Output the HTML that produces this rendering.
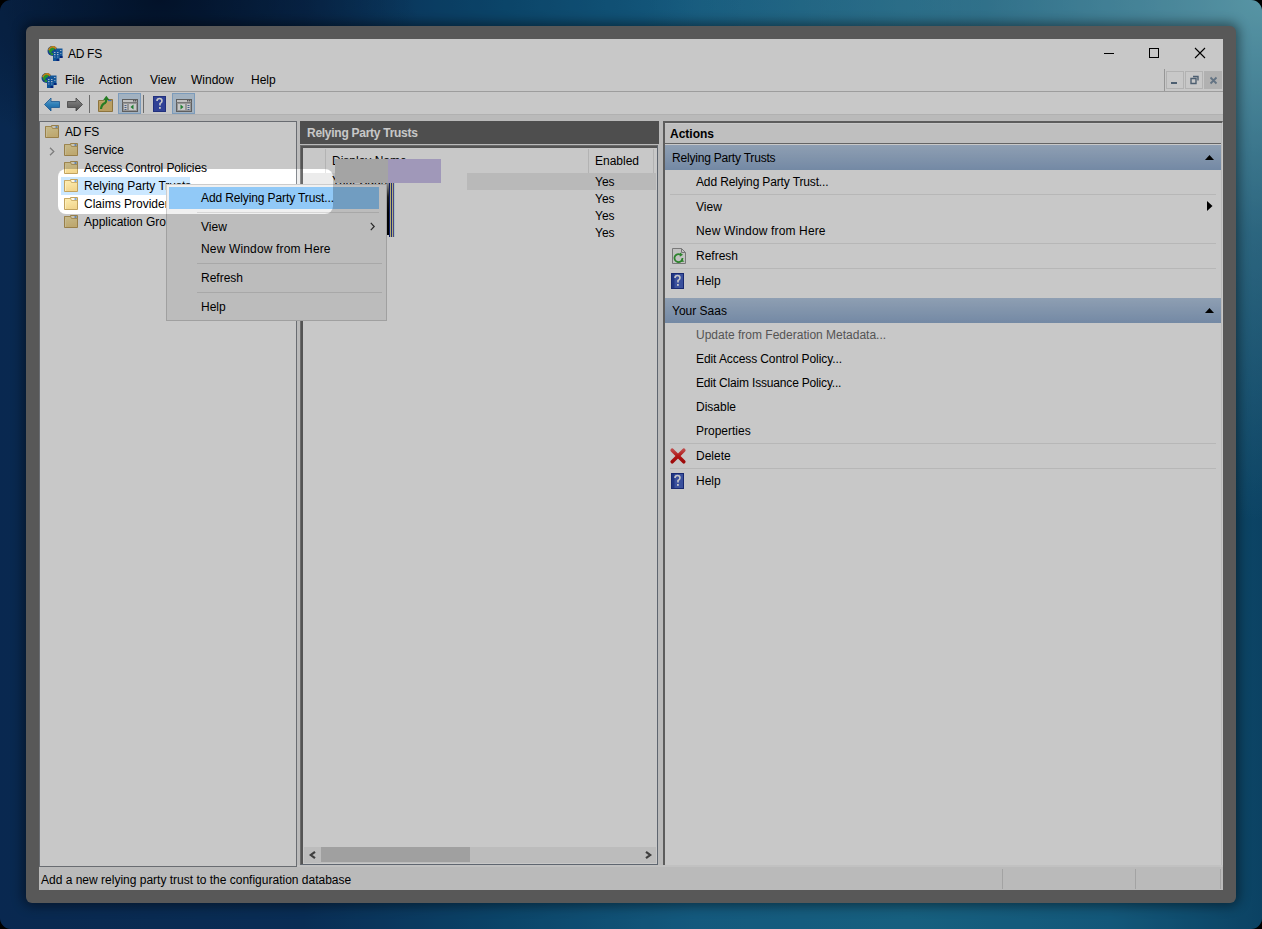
<!DOCTYPE html>
<html><head><meta charset="utf-8">
<style>
*{box-sizing:border-box}
html,body{margin:0;padding:0}
body{width:1262px;height:929px;background:#000;overflow:hidden;position:relative;font-family:"Liberation Sans",sans-serif;font-size:12px;color:#000}
.a{position:absolute}
.t{position:absolute;white-space:nowrap;line-height:16px;font-size:12px;color:#000}
.b{font-weight:bold}
svg{position:absolute;overflow:visible}
#scr{position:absolute;left:0;top:0;width:1262px;height:929px;border-radius:11px;overflow:hidden;
 background:
  radial-gradient(ellipse 620px 520px at 1262px 0px, rgba(112,190,210,1) 0%, rgba(90,165,190,0.55) 45%, rgba(60,140,170,0) 100%),
  radial-gradient(ellipse 260px 160px at 160px 0px, rgba(4,22,50,0.95) 0%, rgba(4,22,50,0) 100%),
  linear-gradient(90deg,#0c3466 0%,#0c3a6c 24%,#0f5886 40%,#1a72a0 55%,#1e7aa2 72%,#19709b 88%,#0f557f 100%);
}
#win{position:absolute;left:26px;top:26px;width:1210px;height:877px;background:#717171;border-radius:6px;box-shadow:0 0 12px 3px rgba(0,0,0,0.45)}
#cont{position:absolute;left:39px;top:39px;width:1184px;height:851px;background:#fff}
#spot{position:absolute;left:58px;top:169px;width:275px;height:45px;border-radius:8px;box-shadow:0 0 0 3000px rgba(0,0,0,0.215);pointer-events:none}
.sep{position:absolute;height:1px;background:#eaeaea}
</style></head><body>
<div id="scr">
 <div id="win"></div>
 <div id="cont"></div>

 <!-- title bar -->
 <svg id="appico1" style="left:47px;top:45px" width="16" height="16" viewBox="0 0 16 16">
  <g>
   <circle cx="5.5" cy="6" r="5" fill="#1d4fb8"/>
   <path d="M1.5 4 Q3 1.5 6 1.2 L8 2.5 7 5 5 6 4 8.5 2 7.5Z" fill="#2fbd3a"/>
   <path d="M1 5 Q2.5 0.5 7 1 Q9.5 1.5 10 4 L8.5 4.5 Q7.5 2.5 5 2.8 Q2.8 3.2 2.5 5.5Z" fill="#f0a020"/>
   <path d="M3 9 Q5 11 8 10 L7 8 5 8Z" fill="#2fbd3a"/>
   <rect x="9" y="3.5" width="6.5" height="9.5" fill="#1a6fc4"/>
   <rect x="6" y="6" width="6.5" height="10" fill="#1569c0"/>
   <rect x="7" y="7" width="1.5" height="1" fill="#cfe4ff"/><rect x="10" y="7" width="1.5" height="1" fill="#cfe4ff"/>
   <rect x="7" y="9" width="1.5" height="1.2" fill="#cfe4ff"/><rect x="10" y="9" width="1.5" height="1.2" fill="#cfe4ff"/>
   <rect x="7" y="11.5" width="1.5" height="1" fill="#8fc0f0"/><rect x="10" y="11.5" width="1.5" height="1" fill="#8fc0f0"/>
   <rect x="13" y="5" width="1.5" height="1" fill="#cfe4ff"/><rect x="13" y="8" width="1.5" height="1" fill="#8fc0f0"/>
   <rect x="9.5" y="14" width="2.5" height="2" fill="#0a2f9a"/><rect x="13" y="11" width="2.5" height="2" fill="#0a2f9a"/>
  </g>
 </svg>
 <div class="t" style="left:68px;top:46px;letter-spacing:-0.3px">AD FS</div>
 <div class="a" style="left:1104px;top:53px;width:10px;height:1px;background:#000"></div>
 <div class="a" style="left:1149px;top:48px;width:10px;height:10px;border:1px solid #000"></div>
 <svg style="left:1195px;top:48px" width="10" height="10" viewBox="0 0 10 10"><path d="M0 0L10 10M10 0L0 10" stroke="#000" stroke-width="1.1"/></svg>

 <!-- menu bar -->
 <svg style="left:41px;top:72px" width="16" height="16" viewBox="0 0 16 16"><g><circle cx="5.5" cy="6" r="5" fill="#1d4fb8"/>
   <path d="M1.5 4 Q3 1.5 6 1.2 L8 2.5 7 5 5 6 4 8.5 2 7.5Z" fill="#2fbd3a"/>
   <path d="M1 5 Q2.5 0.5 7 1 Q9.5 1.5 10 4 L8.5 4.5 Q7.5 2.5 5 2.8 Q2.8 3.2 2.5 5.5Z" fill="#f0a020"/>
   <path d="M3 9 Q5 11 8 10 L7 8 5 8Z" fill="#2fbd3a"/>
   <rect x="9" y="3.5" width="6.5" height="9.5" fill="#1a6fc4"/>
   <rect x="6" y="6" width="6.5" height="10" fill="#1569c0"/>
   <rect x="7" y="7" width="1.5" height="1" fill="#cfe4ff"/><rect x="10" y="7" width="1.5" height="1" fill="#cfe4ff"/>
   <rect x="7" y="9" width="1.5" height="1.2" fill="#cfe4ff"/><rect x="10" y="9" width="1.5" height="1.2" fill="#cfe4ff"/>
   <rect x="7" y="11.5" width="1.5" height="1" fill="#8fc0f0"/><rect x="10" y="11.5" width="1.5" height="1" fill="#8fc0f0"/>
   <rect x="13" y="5" width="1.5" height="1" fill="#cfe4ff"/><rect x="13" y="8" width="1.5" height="1" fill="#8fc0f0"/>
   <rect x="9.5" y="14" width="2.5" height="2" fill="#0a2f9a"/><rect x="13" y="11" width="2.5" height="2" fill="#0a2f9a"/></g></svg>
 <div class="t" style="left:65px;top:72px">File</div>
 <div class="t" style="left:99px;top:72px">Action</div>
 <div class="t" style="left:150px;top:72px">View</div>
 <div class="t" style="left:191px;top:72px">Window</div>
 <div class="t" style="left:251px;top:72px">Help</div>
 <div class="a" style="left:1164px;top:69px;width:1px;height:23px;background:#c0c0c0"></div>
 <div class="a" style="left:1166px;top:71px;width:18px;height:18px;border:1px solid #e3e3e3"></div>
 <div class="a" style="left:1171px;top:82px;width:6px;height:2px;background:#637990"></div>
 <div class="a" style="left:1185px;top:71px;width:18px;height:18px;border:1px solid #e3e3e3"></div>
 <svg style="left:1190px;top:75px" width="10" height="10" viewBox="0 0 10 10"><path d="M3 1.5h5v4M1 3.5h5v5h-5z" fill="none" stroke="#637990" stroke-width="1.4"/></svg>
 <div class="a" style="left:1204px;top:71px;width:18px;height:18px;background:#e2e2e2"></div>
 <svg style="left:1210px;top:77px" width="7" height="7" viewBox="0 0 7 7"><path d="M0.5 0.5L6.5 6.5M6.5 0.5L0.5 6.5" stroke="#7f93a8" stroke-width="1.8"/></svg>
 <div class="a" style="left:39px;top:91px;width:1184px;height:1px;background:#c8c8c8"></div>

 <!-- toolbar -->
 <div class="a" style="left:39px;top:114px;width:1184px;height:776px;background:#eeeeee"></div>
 <div class="a" style="left:39px;top:114px;width:1184px;height:1px;background:#e2e2e2"></div>
 <svg style="left:44px;top:97px" width="16" height="15" viewBox="0 0 16 15"><defs><linearGradient id="bg1" x1="0" y1="0" x2="0" y2="1"><stop offset="0" stop-color="#8fd0ff"/><stop offset="0.5" stop-color="#3ba3ea"/><stop offset="1" stop-color="#1c78c8"/></linearGradient><linearGradient id="bg2" x1="0" y1="0" x2="0" y2="1"><stop offset="0" stop-color="#b0b0b0"/><stop offset="0.5" stop-color="#8a8a8a"/><stop offset="1" stop-color="#5e5e5e"/></linearGradient></defs><path d="M0.5 7.5L7 1V4.5H15.5V10.5H7V14Z" fill="url(#bg1)" stroke="#1f6fb8" stroke-width="0.8"/></svg>
 <svg style="left:67px;top:97px" width="16" height="15" viewBox="0 0 16 15"><path d="M15.5 7.5L9 1V4.5H0.5V10.5H9V14Z" fill="url(#bg2)" stroke="#555" stroke-width="0.8"/></svg>
 <div class="a" style="left:89px;top:95px;width:1px;height:18px;background:#8a8a8a"></div>
 <svg style="left:98px;top:95px" width="16" height="17" viewBox="0 0 16 17"><path d="M0.5 5.5H5.5L6.5 4.5H14.5V16.5H0.5Z" fill="#f3d488" stroke="#b4944e"/><rect x="1" y="7" width="13" height="9" fill="#ecca7c"/><rect x="10" y="5" width="3.5" height="1.2" fill="#5a90e0"/><path d="M3 14Q3.5 9.5 7 8Q8.5 7 8.2 4.5" fill="none" stroke="#2f9e2f" stroke-width="2.2"/><path d="M5 5.2L8.3 0.8 11.5 5Z" fill="#2f9e2f"/></svg>
 <div class="a" style="left:118px;top:93px;width:23px;height:21px;background:#cfe3f7;border:1px solid #9fc6ee"></div>
 <svg style="left:122px;top:99px" width="16" height="13" viewBox="0 0 16 13"><rect x="0.5" y="0.5" width="15" height="12" fill="#f8f8f8" stroke="#7a7a7a"/><path d="M0.5 3.5H15.5" stroke="#9a9a9a"/><rect x="11" y="1" width="1.5" height="1.5" fill="#707070"/><rect x="13" y="1" width="1.5" height="1.5" fill="#707070"/><rect x="1.5" y="4.5" width="4" height="7" fill="#fff" stroke="#c0c0c0"/><rect x="2.5" y="6" width="2" height="1" fill="#5a7ab0"/><rect x="2.5" y="8" width="2" height="1" fill="#5a7ab0"/><rect x="2.5" y="10" width="2" height="1" fill="#5a7ab0"/><rect x="6.5" y="4.5" width="8" height="7" fill="#fff" stroke="#c0c0c0"/><path d="M11.5 5.5V10.5L8.5 8Z" fill="#2aa040"/></svg>
 <div class="a" style="left:143px;top:95px;width:1px;height:18px;background:#8a8a8a"></div>
 <svg style="left:153px;top:96px" width="13" height="16" viewBox="0 0 13 16"><rect x="0" y="0" width="13" height="16" fill="#2c3fa0"/><rect x="1" y="1" width="11" height="14" fill="#3f55c0"/><path d="M4 5Q4 2.5 6.5 2.5Q9 2.5 9 5Q9 6.5 7 7.5V9.5" fill="none" stroke="#fff" stroke-width="1.6"/><rect x="6" y="11" width="1.8" height="1.8" fill="#fff"/></svg>
 <div class="a" style="left:172px;top:93px;width:23px;height:21px;background:#cfe3f7;border:1px solid #9fc6ee"></div>
 <svg style="left:176px;top:99px" width="16" height="13" viewBox="0 0 16 13"><rect x="0.5" y="0.5" width="15" height="12" fill="#f8f8f8" stroke="#7a7a7a"/><path d="M0.5 3.5H15.5" stroke="#9a9a9a"/><rect x="11" y="1" width="1.5" height="1.5" fill="#707070"/><rect x="13" y="1" width="1.5" height="1.5" fill="#707070"/><rect x="1.5" y="4.5" width="8" height="7" fill="#fff" stroke="#c0c0c0"/><path d="M4.5 5.5V10.5L7.5 8Z" fill="#2aa040"/><rect x="10.5" y="4.5" width="4" height="7" fill="#fff" stroke="#c0c0c0"/><rect x="11.5" y="6" width="2" height="1" fill="#5a7ab0"/><rect x="11.5" y="8" width="2" height="1" fill="#5a7ab0"/><rect x="11.5" y="10" width="2" height="1" fill="#5a7ab0"/></svg>

 <!-- PANES -->
 <div id="tree" class="a" style="left:39px;top:121px;width:258px;height:746px;background:#fff;border:1px solid #868a90"></div>
 <div id="mhead" class="a" style="left:300px;top:121px;width:359px;height:23px;background:#646464"></div>
 <div class="t b" style="left:307px;top:125px;color:#fff;letter-spacing:-0.27px">Relying Party Trusts</div>
 <div id="list" class="a" style="left:300px;top:145px;width:358px;height:720px;background:#fff;border-top:1px solid #8a8a8a;border-left:1px solid #8a8a8a;border-right:1px solid #79828f;border-bottom:1px solid #79828f"></div>
 <div class="a" style="left:301px;top:146px;width:356px;height:718px;border-top:2px solid #6b6b6b;border-left:2px solid #6b6b6b"></div>
 <div id="actp" class="a" style="left:663px;top:121px;width:560px;height:746px;background:#fff;border-top:2px solid #767676;border-left:2px solid #767676;border-right:1px solid #fff;border-bottom:1px solid #fff;box-shadow:inset -1px -1px 0 #ececec"></div>

 <!-- actions pane content -->
 <div class="a" style="left:665px;top:123px;width:556px;height:20px;background:#f4f4f4;border-top:1px solid #fff"></div>
 <div class="t b" style="left:670px;top:126px">Actions</div>
 <div class="a" style="left:665px;top:143px;width:556px;height:1px;background:#808080"></div>
 <div class="a" style="left:665px;top:144px;width:555px;height:1px;background:#fff"></div>
 <div class="a" style="left:665px;top:145px;width:556px;height:25px;background:linear-gradient(#b6cbe4,#94afd2)"></div>
 <div class="t" style="left:672px;top:150px;letter-spacing:-0.2px">Relying Party Trusts</div>
 <svg style="left:1205px;top:155px" width="9" height="5" viewBox="0 0 9 5"><path d="M0 5L4.5 0 9 5Z" fill="#000"/></svg>
 <div class="t" style="left:696px;top:174px;letter-spacing:-0.14px">Add Relying Party Trust...</div>
 <div class="sep" style="left:670px;top:194px;width:546px"></div>
 <div class="t" style="left:696px;top:199px">View</div>
 <svg style="left:1207px;top:201px" width="6" height="10" viewBox="0 0 6 10"><path d="M0 0L5.5 5 0 10Z" fill="#000"/></svg>
 <div class="t" style="left:696px;top:223px;letter-spacing:0.15px">New Window from Here</div>
 <div class="sep" style="left:670px;top:243px;width:546px"></div>
 <svg style="left:672px;top:248px" width="14" height="16" viewBox="0 0 14 16"><path d="M0.5 0.5H9.5L13.5 4.5V15.5H0.5Z" fill="#f8f8f8" stroke="#9a9a9a"/><path d="M9.5 0.5V4.5H13.5" fill="none" stroke="#9a9a9a"/><path d="M10.5 10A4 4 0 1 1 8.5 6.6" fill="none" stroke="#3aa83a" stroke-width="1.8"/><path d="M8 4.5L11 6.8 7.8 8.8Z" fill="#3aa83a"/><path d="M9.5 11l3 2.5-3.5 0.5z" fill="#3aa83a"/></svg>
 <div class="t" style="left:696px;top:248px">Refresh</div>
 <div class="sep" style="left:670px;top:268px;width:546px"></div>
 <svg id="helpico" style="left:671px;top:273px" width="13" height="16" viewBox="0 0 13 16"><rect x="0" y="0" width="13" height="16" fill="#1f3590"/><rect x="1" y="1" width="11" height="14" fill="#4b66c8"/><rect x="1" y="1" width="2.5" height="14" fill="#2a45a8"/><path d="M4 5Q4 2.5 6.5 2.5Q9 2.5 9 5Q9 6.5 7 7.5V9.5" fill="none" stroke="#fff" stroke-width="1.6"/><rect x="6" y="11" width="1.8" height="1.8" fill="#fff"/></svg>
 <div class="t" style="left:696px;top:273px">Help</div>

 <div class="a" style="left:665px;top:298px;width:556px;height:25px;background:linear-gradient(#b6cbe4,#94afd2)"></div>
 <div class="t" style="left:672px;top:303px">Your Saas</div>
 <svg style="left:1205px;top:308px" width="9" height="5" viewBox="0 0 9 5"><path d="M0 5L4.5 0 9 5Z" fill="#000"/></svg>
 <div class="t" style="left:696px;top:327px;color:#6d6d6d">Update from Federation Metadata...</div>
 <div class="t" style="left:696px;top:351px;letter-spacing:-0.09px">Edit Access Control Policy...</div>
 <div class="t" style="left:696px;top:375px;letter-spacing:-0.18px">Edit Claim Issuance Policy...</div>
 <div class="t" style="left:696px;top:399px">Disable</div>
 <div class="t" style="left:696px;top:423px">Properties</div>
 <div class="sep" style="left:670px;top:443px;width:546px"></div>
 <svg style="left:670px;top:448px" width="16" height="16" viewBox="0 0 16 16"><defs><linearGradient id="xg" x1="0" y1="0" x2="0" y2="1"><stop offset="0" stop-color="#f25a5a"/><stop offset="0.5" stop-color="#e41c1c"/><stop offset="1" stop-color="#c80e0e"/></linearGradient></defs><path d="M2.2 2.2L13.8 13.8M13.8 2.2L2.2 13.8" stroke="url(#xg)" stroke-width="3.6" stroke-linecap="round"/></svg>
 <div class="t" style="left:696px;top:448px">Delete</div>
 <div class="sep" style="left:670px;top:468px;width:546px"></div>
 <svg style="left:671px;top:473px" width="13" height="16" viewBox="0 0 13 16"><rect x="0" y="0" width="13" height="16" fill="#1f3590"/><rect x="1" y="1" width="11" height="14" fill="#4b66c8"/><rect x="1" y="1" width="2.5" height="14" fill="#2a45a8"/><path d="M4 5Q4 2.5 6.5 2.5Q9 2.5 9 5Q9 6.5 7 7.5V9.5" fill="none" stroke="#fff" stroke-width="1.6"/><rect x="6" y="11" width="1.8" height="1.8" fill="#fff"/></svg>
 <div class="t" style="left:696px;top:473px">Help</div>

 <!-- status bar -->
 <div class="a" style="left:297px;top:865px;width:926px;height:2px;background:#f6f6f6"></div>
 <div class="t" style="left:41px;top:872px">Add a new relying party trust to the configuration database</div>
 <div class="a" style="left:1002px;top:869px;width:1px;height:20px;background:#d0d0d0"></div>
 <div class="a" style="left:1135px;top:869px;width:1px;height:20px;background:#d0d0d0"></div>
 <div class="a" style="left:1220px;top:869px;width:1px;height:20px;background:#d0d0d0"></div>

 <!-- tree content -->
 <svg style="left:0;top:0" width="0" height="0"><defs>
  <linearGradient id="fg" x1="0" y1="0" x2="0.3" y2="1"><stop offset="0" stop-color="#fff0b4"/><stop offset="1" stop-color="#f2d68e"/></linearGradient>
 </defs></svg>
 <svg style="left:45px;top:125px" width="14" height="13" viewBox="0 0 14 13"><g><path d="M0.5 1.5H6.5V0.5H13.5V12.5H0.5Z" fill="url(#fg)" stroke="#c2a35e"/>
   <rect x="7.5" y="1.3" width="4" height="1.4" fill="#ffffff"/><rect x="10.5" y="1.3" width="2" height="1.4" fill="#4a8ee8"/>
   <path d="M0.5 1.5H6.5L7.5 3.5H13.5" fill="none" stroke="#c9ab68" stroke-width="0.9"/>
   <rect x="1" y="4" width="1" height="8" fill="#fff6d0" opacity="0.6"/></g></svg>
 <div class="t" style="left:65px;top:124px;letter-spacing:-0.3px">AD FS</div>
 <svg style="left:49px;top:147px" width="6" height="9" viewBox="0 0 6 9"><path d="M1 0.8L4.8 4.5 1 8.2" fill="none" stroke="#a0a0a0" stroke-width="1.3"/></svg>
 <svg style="left:64px;top:143px" width="14" height="13" viewBox="0 0 14 13"><g><path d="M0.5 1.5H6.5V0.5H13.5V12.5H0.5Z" fill="url(#fg)" stroke="#c2a35e"/>
   <rect x="7.5" y="1.3" width="4" height="1.4" fill="#ffffff"/><rect x="10.5" y="1.3" width="2" height="1.4" fill="#4a8ee8"/>
   <path d="M0.5 1.5H6.5L7.5 3.5H13.5" fill="none" stroke="#c9ab68" stroke-width="0.9"/>
   <rect x="1" y="4" width="1" height="8" fill="#fff6d0" opacity="0.6"/></g></svg>
 <div class="t" style="left:84px;top:142px">Service</div>
 <svg style="left:64px;top:161px" width="14" height="13" viewBox="0 0 14 13"><g><path d="M0.5 1.5H6.5V0.5H13.5V12.5H0.5Z" fill="url(#fg)" stroke="#c2a35e"/>
   <rect x="7.5" y="1.3" width="4" height="1.4" fill="#ffffff"/><rect x="10.5" y="1.3" width="2" height="1.4" fill="#4a8ee8"/>
   <path d="M0.5 1.5H6.5L7.5 3.5H13.5" fill="none" stroke="#c9ab68" stroke-width="0.9"/>
   <rect x="1" y="4" width="1" height="8" fill="#fff6d0" opacity="0.6"/></g></svg>
 <div class="t" style="left:84px;top:160px;letter-spacing:-0.11px">Access Control Policies</div>
 <div class="a" style="left:61px;top:177px;width:129px;height:18px;background:#cce8ff"></div>
 <svg style="left:64px;top:179px" width="14" height="13" viewBox="0 0 14 13"><g><path d="M0.5 1.5H6.5V0.5H13.5V12.5H0.5Z" fill="url(#fg)" stroke="#c2a35e"/>
   <rect x="7.5" y="1.3" width="4" height="1.4" fill="#ffffff"/><rect x="10.5" y="1.3" width="2" height="1.4" fill="#4a8ee8"/>
   <path d="M0.5 1.5H6.5L7.5 3.5H13.5" fill="none" stroke="#c9ab68" stroke-width="0.9"/>
   <rect x="1" y="4" width="1" height="8" fill="#fff6d0" opacity="0.6"/></g></svg>
 <div class="t" style="left:84px;top:178px">Relying Party Trusts</div>
 <svg style="left:64px;top:197px" width="14" height="13" viewBox="0 0 14 13"><g><path d="M0.5 1.5H6.5V0.5H13.5V12.5H0.5Z" fill="url(#fg)" stroke="#c2a35e"/>
   <rect x="7.5" y="1.3" width="4" height="1.4" fill="#ffffff"/><rect x="10.5" y="1.3" width="2" height="1.4" fill="#4a8ee8"/>
   <path d="M0.5 1.5H6.5L7.5 3.5H13.5" fill="none" stroke="#c9ab68" stroke-width="0.9"/>
   <rect x="1" y="4" width="1" height="8" fill="#fff6d0" opacity="0.6"/></g></svg>
 <div class="t" style="left:84px;top:196px">Claims Provider Trusts</div>
 <svg style="left:64px;top:215px" width="14" height="13" viewBox="0 0 14 13"><g><path d="M0.5 1.5H6.5V0.5H13.5V12.5H0.5Z" fill="url(#fg)" stroke="#c2a35e"/>
   <rect x="7.5" y="1.3" width="4" height="1.4" fill="#ffffff"/><rect x="10.5" y="1.3" width="2" height="1.4" fill="#4a8ee8"/>
   <path d="M0.5 1.5H6.5L7.5 3.5H13.5" fill="none" stroke="#c9ab68" stroke-width="0.9"/>
   <rect x="1" y="4" width="1" height="8" fill="#fff6d0" opacity="0.6"/></g></svg>
 <div class="t" style="left:84px;top:214px">Application Groups</div>

 <!-- list content -->
 <div class="a" style="left:325px;top:149px;width:1px;height:24px;background:#e5e5e5"></div>
 <div class="a" style="left:588px;top:149px;width:1px;height:24px;background:#e5e5e5"></div>
 <div class="a" style="left:653px;top:149px;width:1px;height:24px;background:#e5e5e5"></div>
 <div class="t" style="left:332px;top:153px">Display Name</div>
 <div class="t" style="left:595px;top:153px">Enabled</div>
 <div class="a" style="left:467px;top:173px;width:189px;height:17px;background:#ececec"></div>
 <div class="a" style="left:303px;top:173px;width:84px;height:17px;background:#ececec"></div>
 <div class="t" style="left:332px;top:173px">Your Saas</div>
 <div class="t" style="left:595px;top:174px">Yes</div>
 <div class="t" style="left:595px;top:191px">Yes</div>
 <div class="t" style="left:595px;top:208px">Yes</div>
 <div class="t" style="left:595px;top:225px">Yes</div>
 <!-- redaction -->
 <div class="a" style="left:335px;top:159px;width:53px;height:24px;background:#d2d2d2"></div>
 <div class="a" style="left:388px;top:159px;width:53px;height:24px;background:#ccc2ec"></div>
 <!-- stripes artifact -->
 <div class="a" style="left:387px;top:183px;width:2px;height:54px;background:linear-gradient(#b0b0b0 0px,#202020 14px,#000 30px,#000 54px)"></div>
 <div class="a" style="left:389px;top:183px;width:1px;height:54px;background:#14287a"></div>
 <div class="a" style="left:390px;top:183px;width:1px;height:54px;background:#e8e098"></div>
 <div class="a" style="left:391px;top:183px;width:1px;height:54px;background:#283a9a"></div>
 <div class="a" style="left:392px;top:183px;width:1px;height:54px;background:#e8e098"></div>
 <div class="a" style="left:393px;top:183px;width:1px;height:54px;background:#5a5ab0"></div>
 <div class="a" style="left:394px;top:183px;width:1px;height:54px;background:#d8f4f4"></div>
 <div class="a" style="left:387px;top:235px;width:2px;height:2px;background:#fff"></div>
 <!-- scrollbar -->
 <div class="a" style="left:304px;top:847px;width:352px;height:16px;background:#f0f0f0"></div>
 <div class="a" style="left:321px;top:847px;width:149px;height:15px;background:#cdcdcd"></div>
 <svg style="left:309px;top:851px" width="7" height="8" viewBox="0 0 7 8"><path d="M6 0.8L1.8 4 6 7.2" fill="none" stroke="#505050" stroke-width="2.2" stroke-linejoin="miter"/></svg>
 <svg style="left:645px;top:851px" width="7" height="8" viewBox="0 0 7 8"><path d="M1 0.8L5.2 4 1 7.2" fill="none" stroke="#505050" stroke-width="2.2" stroke-linejoin="miter"/></svg>
 <!-- context menu -->
 <div class="a" style="left:166px;top:184px;width:221px;height:137px;background:#f0f0f0;border:1px solid #cccccc"></div>
 <div class="a" style="left:169px;top:187px;width:210px;height:22px;background:#91c9f7"></div>
 <div class="t" style="left:201px;top:190px;letter-spacing:-0.12px">Add Relying Party Trust...</div>
 <div class="sep" style="left:197px;top:212px;width:182px;background:#d7d7d7"></div>
 <div class="t" style="left:201px;top:219px">View</div>
 <svg style="left:370px;top:222px" width="5" height="9" viewBox="0 0 5 9"><path d="M0.8 0.8L4.2 4.5 0.8 8.2" fill="none" stroke="#333" stroke-width="1.2"/></svg>
 <div class="t" style="left:201px;top:241px;letter-spacing:0.15px">New Window from Here</div>
 <div class="sep" style="left:197px;top:263px;width:185px;background:#d7d7d7"></div>
 <div class="t" style="left:201px;top:270px">Refresh</div>
 <div class="sep" style="left:197px;top:292px;width:185px;background:#d7d7d7"></div>
 <div class="t" style="left:201px;top:299px">Help</div>

 <div id="spot"></div>
</div>
</body></html>
